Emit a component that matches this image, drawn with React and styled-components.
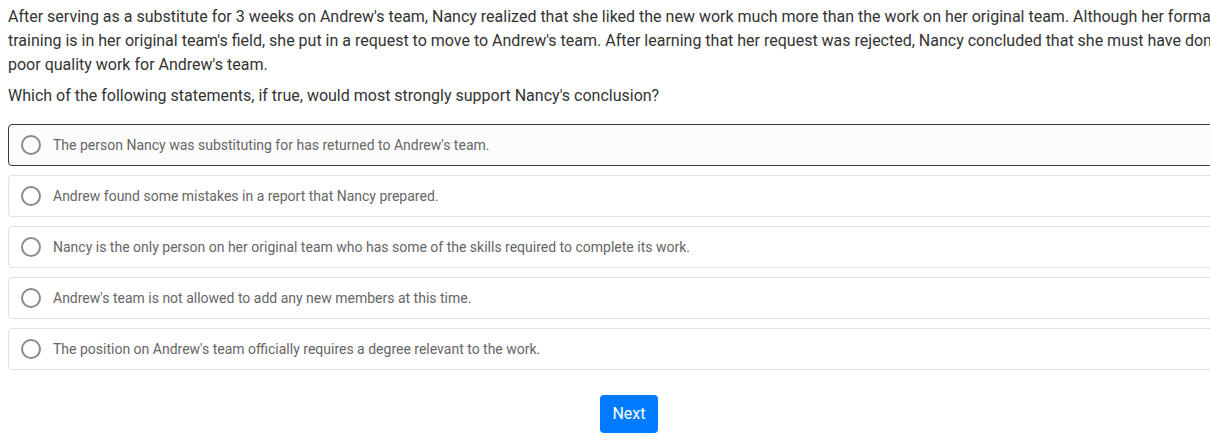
import React from "react";
import styled, { createGlobalStyle } from "styled-components";

const GlobalStyle = createGlobalStyle`
  html, body {
    margin: 0;
    padding: 0;
    overflow: hidden;
    background: #fff;
  }
  body {
    font-family: Roboto, "Liberation Sans", sans-serif;
  }
`;

const options = [
  "The person Nancy was substituting for has returned to Andrew's team.",
  "Andrew found some mistakes in a report that Nancy prepared.",
  "Nancy is the only person on her original team who has some of the skills required to complete its work.",
  "Andrew's team is not allowed to add any new members at this time.",
  "The position on Andrew's team officially requires a degree relevant to the work.",
];

export default function App() {
  const selected = 0;
  return (
    <>
      <GlobalStyle />
      <Wrap>
        <Passage>
          After serving as a substitute for 3 weeks on Andrew's team, Nancy
          realized that she liked the new work much more than the work on her
          original team. Although her formal training is in her original team's
          field, she put in a request to move to Andrew's team. After learning
          that her request was rejected, Nancy concluded that she must have done
          poor quality work for Andrew's team.
        </Passage>
        <Question>
          Which of the following statements, if true, would most strongly
          support Nancy's conclusion?
        </Question>
        <OptionList>
          {options.map((text, i) => (
            <Option key={i} $active={i === selected}>
              <Radio />
              <span>{text}</span>
            </Option>
          ))}
        </OptionList>
        <Footer>
          <NextButton>Next</NextButton>
        </Footer>
      </Wrap>
    </>
  );
}

const Wrap = styled.div`
  width: 1242px;
  margin-left: 8px;
  padding-top: 5px;
`;
const Passage = styled.p`
  margin: 0 0 7px;
  font-size: 16px;
  line-height: 24px;
  color: #333;
`;
const Question = styled.p`
  margin: 0 0 16px;
  font-size: 16px;
  line-height: 24px;
  color: #333;
`;
const OptionList = styled.div`
  display: flex;
  flex-direction: column;
  gap: 9px;
`;
const Option = styled.label`
  display: flex;
  align-items: center;
  gap: 12px;
  height: 42px;
  box-sizing: border-box;
  padding: 0 12px;
  border: 1px solid ${(p) => (p.$active ? "#343a40" : "#dee2e6")};
  border-radius: 4px;
  background: ${(p) => (p.$active ? "#fcfcfc" : "#fff")};
  font-size: 14px;
  line-height: 24px;
  color: #666;
`;
const Radio = styled.span`
  width: 20px;
  height: 20px;
  box-sizing: border-box;
  border: 2px solid #8a8a8a;
  border-radius: 50%;
  flex-shrink: 0;
`;
const Footer = styled.div`
  display: flex;
  justify-content: center;
  padding-top: 25px;
`;
const NextButton = styled.button`
  font-family: Roboto, "Liberation Sans", sans-serif;
  font-size: 16px;
  line-height: 24px;
  padding: 7px 12px;
  border: none;
  border-radius: 4px;
  background: #007bff;
  color: #fff;
  cursor: pointer;
`;
